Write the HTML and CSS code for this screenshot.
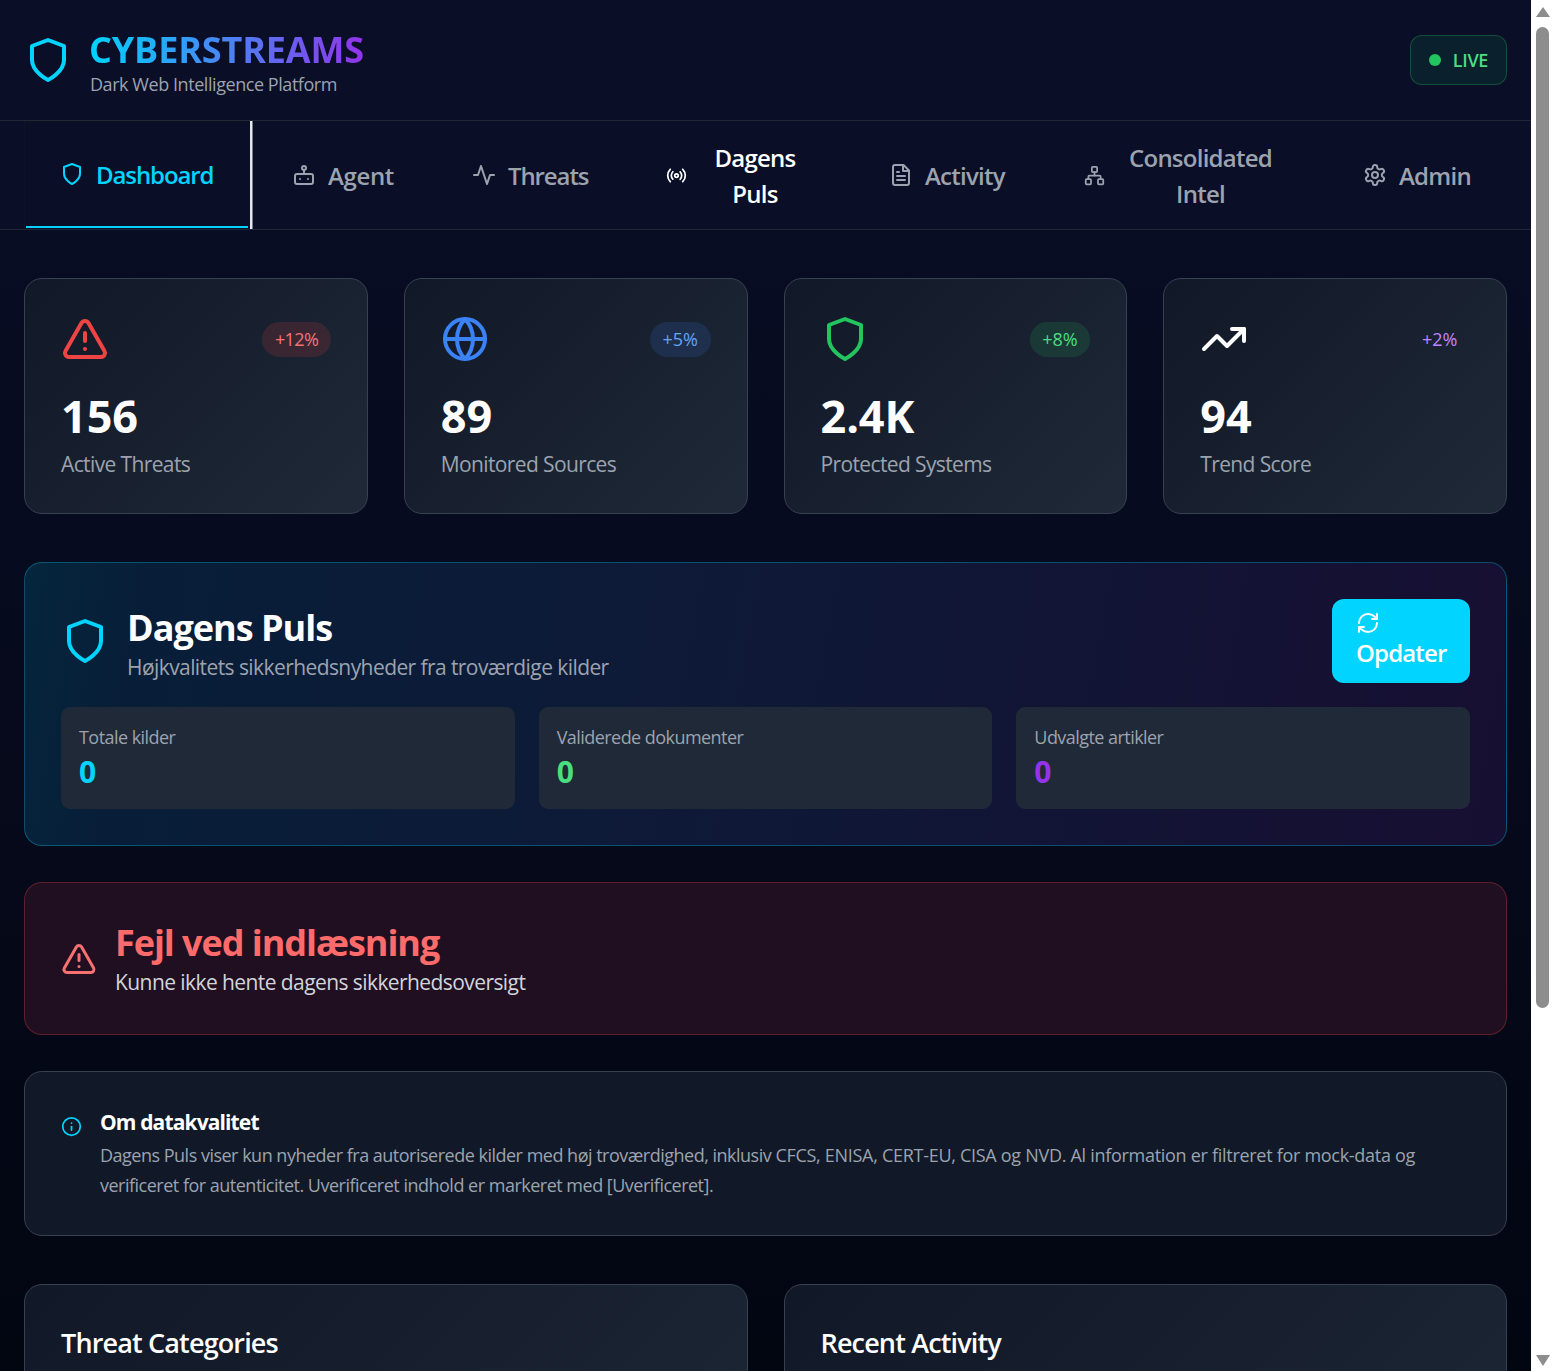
FILE: index.html
```html
<!DOCTYPE html>
<html lang="da">

<head>
    <meta charset="UTF-8">
    <meta name="viewport" content="width=device-width, initial-scale=1.0">
    <title>Cyberstreams</title>
    <link rel="stylesheet" href="styles.css">
</head>

<body>
    <svg class="sprite" xmlns="http://www.w3.org/2000/svg">
        <symbol id="i-shield" viewBox="0 0 24 24"><path d="M12 22s8-4 8-10V5l-8-3-8 3v7c0 6 8 10 8 10z"/></symbol>
        <symbol id="i-bot" viewBox="0 0 24 24"><rect width="18" height="10" x="3" y="11" rx="2"/><circle cx="12" cy="5" r="2"/><path d="M12 7v4"/><line x1="8" x2="8" y1="16" y2="16"/><line x1="16" x2="16" y1="16" y2="16"/></symbol>
        <symbol id="i-activity" viewBox="0 0 24 24"><polyline points="22 12 18 12 15 21 9 3 6 12 2 12"/></symbol>
        <symbol id="i-radio" viewBox="0 0 24 24"><path d="M4.9 19.1C1 15.2 1 8.8 4.9 4.9"/><path d="M7.8 16.2c-2.3-2.3-2.3-6.1 0-8.5"/><circle cx="12" cy="12" r="2"/><path d="M16.2 7.8c2.3 2.3 2.3 6.1 0 8.5"/><path d="M19.1 4.9C23 8.8 23 15.1 19.1 19"/></symbol>
        <symbol id="i-file" viewBox="0 0 24 24"><path d="M14.5 2H6a2 2 0 0 0-2 2v16a2 2 0 0 0 2 2h12a2 2 0 0 0 2-2V7.5L14.5 2z"/><polyline points="14 2 14 8 20 8"/><line x1="16" x2="8" y1="13" y2="13"/><line x1="16" x2="8" y1="17" y2="17"/><line x1="10" x2="8" y1="9" y2="9"/></symbol>
        <symbol id="i-network" viewBox="0 0 24 24"><rect x="16" y="16" width="6" height="6" rx="1"/><rect x="2" y="16" width="6" height="6" rx="1"/><rect x="9" y="2" width="6" height="6" rx="1"/><path d="M5 16v-3a1 1 0 0 1 1-1h12a1 1 0 0 1 1 1v3"/><path d="M12 12V8"/></symbol>
        <symbol id="i-gear" viewBox="0 0 24 24"><path d="M12.22 2h-.44a2 2 0 0 0-2 2v.18a2 2 0 0 1-1 1.73l-.43.25a2 2 0 0 1-2 0l-.15-.08a2 2 0 0 0-2.73.73l-.22.38a2 2 0 0 0 .73 2.73l.15.1a2 2 0 0 1 1 1.72v.51a2 2 0 0 1-1 1.74l-.15.09a2 2 0 0 0-.73 2.73l.22.38a2 2 0 0 0 2.73.73l.15-.08a2 2 0 0 1 2 0l.43.25a2 2 0 0 1 1 1.73V20a2 2 0 0 0 2 2h.44a2 2 0 0 0 2-2v-.18a2 2 0 0 1 1-1.73l.43-.25a2 2 0 0 1 2 0l.15.08a2 2 0 0 0 2.73-.73l.22-.39a2 2 0 0 0-.73-2.73l-.15-.08a2 2 0 0 1-1-1.74v-.5a2 2 0 0 1 1-1.74l.15-.09a2 2 0 0 0 .73-2.73l-.22-.38a2 2 0 0 0-2.73-.73l-.15.08a2 2 0 0 1-2 0l-.43-.25a2 2 0 0 1-1-1.73V4a2 2 0 0 0-2-2z"/><circle cx="12" cy="12" r="3"/></symbol>
        <symbol id="i-alert" viewBox="0 0 24 24"><path d="m21.73 18-8-14a2 2 0 0 0-3.48 0l-8 14A2 2 0 0 0 4 21h16a2 2 0 0 0 1.73-3Z"/><path d="M12 9v4"/><path d="M12 17h.01"/></symbol>
        <symbol id="i-globe" viewBox="0 0 24 24"><circle cx="12" cy="12" r="10"/><path d="M12 2a14.5 14.5 0 0 0 0 20 14.5 14.5 0 0 0 0-20"/><path d="M2 12h20"/></symbol>
        <symbol id="i-trend" viewBox="0 0 24 24"><polyline points="22 7 13.5 15.5 8.5 10.5 2 17"/><polyline points="16 7 22 7 22 13"/></symbol>
        <symbol id="i-refresh" viewBox="0 0 24 24"><path d="M3 12a9 9 0 0 1 9-9 9.75 9.75 0 0 1 6.74 2.74L21 8"/><path d="M21 3v5h-5"/><path d="M21 12a9 9 0 0 1-9 9 9.75 9.75 0 0 1-6.74-2.74L3 16"/><path d="M8 16H3v5"/></symbol>
        <symbol id="i-info" viewBox="0 0 24 24"><circle cx="12" cy="12" r="10"/><path d="M12 16v-4"/><path d="M12 8h.01"/></symbol>
    </svg>

    <div class="window">
        <div class="page">
            <header class="header">
                <div class="brand">
                    <svg class="icon icon-48 cyan"><use href="#i-shield"/></svg>
                    <div class="brand-text">
                        <h1 class="brand-name">CYBERSTREAMS</h1>
                        <p class="brand-sub">Dark Web Intelligence Platform</p>
                    </div>
                </div>
                <div class="live"><span class="live-dot"></span>LIVE</div>
            </header>

            <nav class="nav">
                <button class="tab tab-active tab-tight"><svg class="icon icon-24"><use href="#i-shield"/></svg><span>Dashboard</span></button>
                <button class="tab tab-loose"><svg class="icon icon-24"><use href="#i-bot"/></svg><span>Agent</span></button>
                <button class="tab tab-tight"><svg class="icon icon-24"><use href="#i-activity"/></svg><span>Threats</span></button>
                <button class="tab tab-hot"><svg class="icon icon-21"><use href="#i-radio"/></svg><span class="tab-wrap">Dagens<br>Puls</span></button>
                <button class="tab"><svg class="icon icon-24"><use href="#i-file"/></svg><span>Activity</span></button>
                <button class="tab"><svg class="icon icon-21"><use href="#i-network"/></svg><span class="tab-wrap tab-wrap-wide">Consolidated<br>Intel</span></button>
                <button class="tab"><svg class="icon icon-24"><use href="#i-gear"/></svg><span>Admin</span></button>
            </nav>

            <main class="main">
                <section class="stats">
                    <div class="card stat">
                        <div class="stat-top">
                            <svg class="icon icon-48 red"><use href="#i-alert"/></svg>
                            <span class="change change-red">+12%</span>
                        </div>
                        <div class="stat-num">156</div>
                        <div class="stat-label">Active Threats</div>
                    </div>
                    <div class="card stat">
                        <div class="stat-top">
                            <svg class="icon icon-48 blue"><use href="#i-globe"/></svg>
                            <span class="change change-blue">+5%</span>
                        </div>
                        <div class="stat-num">89</div>
                        <div class="stat-label">Monitored Sources</div>
                    </div>
                    <div class="card stat">
                        <div class="stat-top">
                            <svg class="icon icon-48 green"><use href="#i-shield"/></svg>
                            <span class="change change-green">+8%</span>
                        </div>
                        <div class="stat-num">2.4K</div>
                        <div class="stat-label">Protected Systems</div>
                    </div>
                    <div class="card stat">
                        <div class="stat-top">
                            <svg class="icon icon-48 white"><use href="#i-trend"/></svg>
                            <span class="change change-purple">+2%</span>
                        </div>
                        <div class="stat-num">94</div>
                        <div class="stat-label">Trend Score</div>
                    </div>
                </section>

                <section class="pulse">
                    <div class="pulse-head">
                        <div class="pulse-title">
                            <svg class="icon icon-48 cyan"><use href="#i-shield"/></svg>
                            <div class="pulse-text">
                                <h2 class="pulse-name">Dagens Puls</h2>
                                <p class="pulse-sub">Højkvalitets sikkerhedsnyheder fra troværdige kilder</p>
                            </div>
                        </div>
                        <button class="refresh">
                            <svg class="icon icon-24"><use href="#i-refresh"/></svg>
                            <span>Opdater</span>
                        </button>
                    </div>
                    <div class="pulse-stats">
                        <div class="pulse-box">
                            <div class="box-label">Totale kilder</div>
                            <div class="box-num cyan">0</div>
                        </div>
                        <div class="pulse-box">
                            <div class="box-label">Validerede dokumenter</div>
                            <div class="box-num lime">0</div>
                        </div>
                        <div class="pulse-box">
                            <div class="box-label">Udvalgte artikler</div>
                            <div class="box-num violet">0</div>
                        </div>
                    </div>
                </section>

                <section class="error">
                    <svg class="icon icon-36 coral"><use href="#i-alert"/></svg>
                    <div>
                        <h3 class="error-title">Fejl ved indlæsning</h3>
                        <p class="error-text">Kunne ikke hente dagens sikkerhedsoversigt</p>
                    </div>
                </section>

                <section class="info">
                    <svg class="icon icon-21 cyan"><use href="#i-info"/></svg>
                    <div>
                        <h4 class="info-title">Om datakvalitet</h4>
                        <p class="info-text">Dagens Puls viser kun nyheder fra autoriserede kilder med høj troværdighed, inklusiv <span class="info-wide">CFCS, ENISA, CERT-EU, CISA og NVD. Al information er filtreret for mock-data og</span><br>verificeret for autenticitet. Uverificeret indhold er markeret med [Uverificeret].</p>
                    </div>
                </section>

                <section class="lower">
                    <div class="card panel">
                        <h3 class="panel-title">Threat Categories</h3>
                    </div>
                    <div class="card panel">
                        <h3 class="panel-title">Recent Activity</h3>
                    </div>
                </section>
            </main>
        </div>

        <div class="scrollbar">
            <span class="arrow arrow-up"></span>
            <span class="thumb"></span>
            <span class="arrow arrow-down"></span>
        </div>
    </div>
</body>

</html>
```

FILE: styles.css
```css
* {
    box-sizing: border-box;
}

html,
body {
    margin: 0;
    height: 100%;
    overflow: hidden;
}

body {
    font-family: "Open Sans", "Liberation Sans", sans-serif;
    color: #fff;
}

h1, h2, h3, h4, p {
    margin: 0;
}

.sprite {
    display: none;
}

.window {
    display: flex;
    height: 1371px;
}

.page {
    flex: 1;
    min-width: 0;
    overflow: hidden;
    background: linear-gradient(180deg, #0a0e27 0, #020611 1371px);
}

.icon {
    display: block;
    flex: none;
    fill: none;
    stroke: currentColor;
    stroke-width: 2;
    stroke-linecap: round;
    stroke-linejoin: round;
}

.icon-48 { width: 48px; height: 48px; }
.icon-36 { width: 36px; height: 36px; }
.icon-24 { width: 24px; height: 24px; }
.icon-21 { width: 21px; height: 21px; }

.cyan { color: #00d4ff; }
.red { color: #ef4444; }
.blue { color: #3b82f6; }
.green { color: #22c55e; }
.white { color: #fff; }
.lime { color: #4ade80; }
.violet { color: #9333ea; }
.coral { color: #f87171; }

/* header */
.header {
    display: flex;
    justify-content: space-between;
    align-items: center;
    height: 121px;
    padding: 0 24px;
    background: #0a0e27;
    border-bottom: 1px solid #1f2937;
}

.brand {
    display: flex;
    align-items: center;
    gap: 17px;
}

.brand-text {
    padding-top: 8px;
}

.brand-name {
    font-size: 36px;
    line-height: 40px;
    font-weight: 700;
    letter-spacing: -0.15px;
    background: linear-gradient(90deg, #00d4ff, #9333ea);
    -webkit-background-clip: text;
    background-clip: text;
    color: transparent;
    width: max-content;
}

.brand-sub {
    margin-left: 1px;
    font-size: 18px;
    line-height: 28px;
    letter-spacing: -0.44px;
    color: #9ca3af;
}

.live {
    display: flex;
    align-items: center;
    gap: 12px;
    height: 50px;
    padding: 0 18px;
    border: 1px solid rgba(34, 197, 94, .3);
    border-radius: 12px;
    background: rgba(34, 197, 94, .1);
    color: #4ade80;
    font-size: 18px;
    font-weight: 600;
    letter-spacing: -0.35px;
}

.live-dot {
    width: 12px;
    height: 12px;
    border-radius: 50%;
    background: #22c55e;
}

/* tabs */
.nav {
    display: grid;
    grid-template-columns: 226px 174px 188px 217px 189px 273px 180px;
    column-gap: 6px;
    height: 109px;
    padding: 0 24px;
    background: #0a0e27;
    border-bottom: 1px solid #1f2937;
}

.tab {
    position: relative;
    display: flex;
    align-items: center;
    gap: 12px;
    padding: 2px 0 0 36px;
    border: 0;
    background: none;
    color: #9ca3af;
    font-family: inherit;
    font-size: 24px;
    line-height: 36px;
    font-weight: 600;
    letter-spacing: -0.75px;
}

.tab .icon {
    margin-top: -2px;
}

.tab-tight {
    letter-spacing: -1.1px;
}

.tab-loose {
    letter-spacing: -0.35px;
}

.tab-active {
    padding-top: 0;
    color: #00d4ff;
    box-shadow: inset 1px 1px 0 #10131f, 2.5px 0 0 #e5e7eb;
}

.tab-active::after {
    content: "";
    position: absolute;
    left: 2px;
    right: 2px;
    bottom: 1px;
    height: 2px;
    background: #00d4ff;
}

.tab-hot {
    color: #fff;
}

.tab-wrap {
    width: 112px;
    text-align: center;
}

.tab-wrap-wide {
    width: 167px;
}

/* cards */
.main {
    padding: 48px 24px 0;
}

.stats {
    display: grid;
    grid-template-columns: repeat(4, 1fr);
    gap: 36px;
    margin-bottom: 48px;
}

.card {
    border: 1px solid #374151;
    border-radius: 18px;
    background: linear-gradient(135deg, #111827, #1f2937);
}

.stat {
    height: 236px;
    padding: 36px;
}

.stat-top {
    display: flex;
    justify-content: space-between;
    align-items: center;
    height: 48px;
    margin-bottom: 26px;
}

.change {
    height: 35px;
    padding: 0 12.5px;
    border-radius: 18px;
    font-size: 18px;
    line-height: 35px;
    font-weight: 500;
    letter-spacing: -0.6px;
}

.change-red { background: rgba(239, 68, 68, .15); color: #f87171; }
.change-blue { background: rgba(59, 130, 246, .15); color: #60a5fa; letter-spacing: 0; }
.change-green { background: rgba(34, 197, 94, .15); color: #4ade80; letter-spacing: 0; }
.change-purple { color: #c084fc; letter-spacing: 0; }

.stat-num {
    font-size: 45px;
    line-height: 54px;
    font-weight: 700;
    letter-spacing: -0.1px;
    margin-bottom: 6px;
}

.stat-label {
    font-size: 21px;
    line-height: 30px;
    letter-spacing: -0.62px;
    color: #9ca3af;
}

/* dagens puls */
.pulse {
    height: 284px;
    padding: 36px;
    margin-bottom: 36px;
    border: 1px solid rgba(0, 212, 255, .3);
    border-radius: 18px;
    background: linear-gradient(100deg, #04263c 0, #081e38 8%, #0d1a38 40%, #170f32);
}

.pulse-head {
    display: flex;
    justify-content: space-between;
    align-items: center;
    height: 84px;
    margin-bottom: 24px;
}

.pulse-title {
    display: flex;
    align-items: center;
    gap: 18px;
}

.pulse-text {
    padding-top: 3px;
}

.pulse-name {
    font-size: 36px;
    line-height: 48px;
    font-weight: 700;
    letter-spacing: -1px;
}

.pulse-sub {
    font-size: 21px;
    line-height: 30px;
    letter-spacing: -0.58px;
    color: #9ca3af;
}

.refresh {
    width: 138px;
    height: 84px;
    padding: 12px 24px;
    border: 0;
    border-radius: 12px;
    background: #00d4ff;
    color: #fff;
    font-family: inherit;
    font-size: 24px;
    line-height: 36px;
    font-weight: 600;
    letter-spacing: -0.85px;
    text-align: left;
}

.refresh span {
    display: block;
}

.pulse-stats {
    display: grid;
    grid-template-columns: repeat(3, 1fr);
    gap: 24px;
}

.pulse-box {
    height: 102px;
    padding: 18px;
    border-radius: 9px;
    background: #1f2937;
}

.box-label {
    font-size: 18px;
    line-height: 25px;
    letter-spacing: -0.55px;
    color: #9ca3af;
    margin-bottom: 2px;
}

.box-num {
    font-size: 30px;
    line-height: 39px;
    font-weight: 700;
}

/* fejl */
.error {
    display: flex;
    align-items: center;
    gap: 18px;
    height: 153px;
    padding: 0 36px;
    margin-bottom: 36px;
    border: 1px solid rgba(239, 68, 68, .3);
    border-radius: 18px;
    background: #200f20;
}

.error-title {
    font-size: 36px;
    line-height: 48px;
    font-weight: 700;
    letter-spacing: -1.05px;
    color: #ff6b6b;
}

.error-text {
    font-size: 21px;
    line-height: 31px;
    letter-spacing: -0.58px;
    color: #d1d5db;
}

/* info */
.info {
    display: flex;
    align-items: flex-start;
    gap: 18px;
    height: 165px;
    padding: 36px;
    margin-bottom: 48px;
    border: 1px solid #374151;
    border-radius: 18px;
    background: #111827;
}

.info .icon {
    margin-top: 8px;
}

.info-title {
    font-size: 21px;
    line-height: 28px;
    font-weight: 700;
    letter-spacing: -0.87px;
    margin-bottom: 4px;
}

.info-text {
    font-size: 18px;
    line-height: 30px;
    letter-spacing: -0.5px;
    color: #9ca3af;
    white-space: nowrap;
}

.info-wide {
    letter-spacing: -0.29px;
}

/* nederste kort */
.lower {
    display: grid;
    grid-template-columns: 1fr 1fr;
    gap: 36px;
}

.panel {
    height: 400px;
    padding: 36px;
}

.panel-title {
    font-size: 27px;
    line-height: 44px;
    font-weight: 600;
    letter-spacing: -0.85px;
}

/* scrollbar */
.scrollbar {
    display: flex;
    flex: none;
    flex-direction: column;
    align-items: center;
    width: 23px;
    height: 100%;
    padding: 7px 0 5px;
    background: #fff;
}

.arrow {
    width: 0;
    height: 0;
    border-left: 7.5px solid transparent;
    border-right: 7.5px solid transparent;
}

.arrow-up {
    border-bottom: 10px solid #8d8d8d;
}

.arrow-down {
    margin-top: auto;
    border-top: 11px solid #8d8d8d;
}

.thumb {
    width: 13px;
    height: 981px;
    margin-top: 10px;
    border-radius: 7px;
    background: #8d8d8d;
}
```
